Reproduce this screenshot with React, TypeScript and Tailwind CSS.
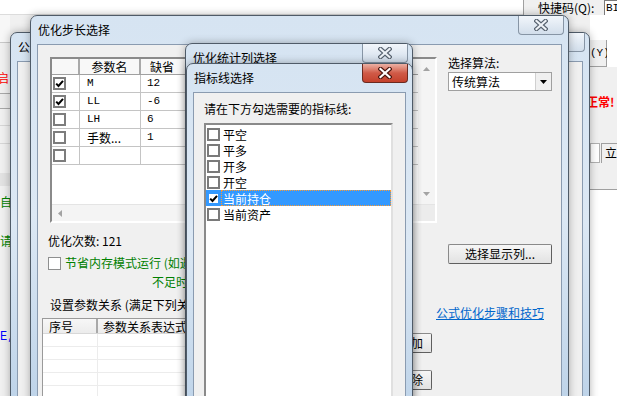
import React from "react";

const CJK = "font-['Noto_Sans_CJK_SC','Noto_Sans',sans-serif]";
const MONO = "font-['Liberation_Mono','Noto_Sans_CJK_SC',monospace]";

function XGlyph({ active }: { active?: boolean }) {
  return (
    <svg width="14" height="12" viewBox="0 0 14 12">
      <path d="M2.5 2 L11.5 10 M11.5 2 L2.5 10" stroke={active ? "#4a150e" : "#56616e"} strokeWidth="4.4" strokeLinecap="square" fill="none" />
      <path d="M2.5 2 L11.5 10 M11.5 2 L2.5 10" stroke={active ? "#ffffff" : "#eef2f7"} strokeWidth="2.2" strokeLinecap="square" fill="none" />
    </svg>
  );
}

function CloseBtn({ active }: { active?: boolean }) {
  return (
    <div
      className={`flex h-[19px] w-[46px] shrink-0 items-center justify-center rounded-b-[4px] border border-t-0 ${
        active
          ? "border-[#6b2a20] bg-gradient-to-b from-[#eab0a4] via-[#d05a47] to-[#c4412c]"
          : "border-[#8795a5] bg-gradient-to-b from-[#f2f6fb] to-[#d2deeb]"
      }`}
    >
      <XGlyph active={active} />
    </div>
  );
}

function Win({
  pos,
  title,
  active,
  children,
}: {
  pos: string;
  title: string;
  active?: boolean;
  children?: React.ReactNode;
}) {
  return (
    <div
      className={`absolute flex flex-col rounded-t-[7px] border border-[#4f5b68] bg-gradient-to-b from-[#d6e4f2] via-[#dce8f4] to-[#bcd2e8] shadow-[0_0_8px_rgba(0,0,0,0.3)] ${pos}`}
    >
      <div className="flex h-[28px] shrink-0 items-start justify-between pl-[7px] pr-[4px]">
        <span className="mt-[6px] whitespace-nowrap text-[12px] leading-[16px] text-black">{title}</span>
        <CloseBtn active={active} />
      </div>
      <div className="mx-[6px] flex-1 overflow-hidden border border-[#8a9bb0] bg-[#f0f0f0]">{children}</div>
    </div>
  );
}

function TableCheck({ checked }: { checked?: boolean }) {
  return (
    <span className="flex h-[13px] w-[13px] shrink-0 items-center justify-center border-2 border-[#7d7d7d] bg-white">
      {checked && (
        <svg width="9" height="9" viewBox="0 0 9 9">
          <path d="M1.2 4.6 L3.5 7 L8 1.8" stroke="#000" strokeWidth="2" fill="none" />
        </svg>
      )}
    </span>
  );
}

function ListCheck({ checked, sel }: { checked?: boolean; sel?: boolean }) {
  return (
    <span
      className={`flex h-[13px] w-[13px] shrink-0 items-center justify-center border-2 bg-white ${
        sel ? "border-[#3399ff]" : "border-[#7a7a7a]"
      }`}
    >
      {checked && (
        <svg width="9" height="9" viewBox="0 0 9 9">
          <path d="M1.2 4.6 L3.5 7 L8 1.8" stroke="#000" strokeWidth="2" fill="none" />
        </svg>
      )}
    </span>
  );
}

function Tri({ dir }: { dir: "up" | "down" | "left" }) {
  const d = dir === "up" ? "M0 4 L3.5 0 L7 4 Z" : dir === "down" ? "M0 0 L7 0 L3.5 4 Z" : "M4 0 L4 7 L0 3.5 Z";
  const w = dir === "left" ? 4 : 7;
  const h = dir === "left" ? 7 : 4;
  return (
    <svg width={w} height={h} viewBox={`0 0 ${w} ${h}`}>
      <path d={d} fill="#a3a3a3" />
    </svg>
  );
}

function BackgroundApp() {
  return (
    <div className="absolute inset-0 flex flex-col bg-[#f0f0f0]">
      <div className="flex h-[15px] shrink-0">
        <div className="flex-1 border-b border-[#dcdcdc] bg-white" />
        <div className="flex w-[94px] border-l border-[#a0a0a0] bg-[#f0f0f0]">
          <span className="ml-[14px] whitespace-nowrap text-[12px] leading-[15px]">快捷码(Q):</span>
          <div className={`ml-auto w-[13px] border-l border-t border-[#7a7a7a] bg-white pl-[1px] text-[11px] leading-[14px] ${MONO}`}>BI</div>
        </div>
      </div>
      <div className="flex flex-1">
        <div className="flex w-[10px] flex-col overflow-hidden">
          <div className="h-[28px] shrink-0 border-b border-[#c8c8c8] bg-[#f7f7f7]" />
          <div className="-ml-[3px] mt-[27px] text-[12px] leading-[16px] text-[#ff0000]">启</div>
          <div className="mt-[7px] h-[16px] shrink-0 border-y border-[#a8a8a8] bg-[#ececec]" />
          <div className="mt-[16px] border-b border-[#d6d6d6]" />
          <div className="mt-[17px] border-b border-[#d6d6d6]" />
          <div className="mt-[29px] h-[13px] shrink-0 bg-[#e2e2e2]" />
          <div className="mt-[8px] text-[12px] leading-[16px] text-[#008000]">自</div>
          <div className="mt-[23px] text-[12px] leading-[16px] text-[#008000]">请</div>
          <div className={`mt-[80px] text-[12px] leading-[16px] text-[#0000ff] ${MONO}`}>E,</div>
        </div>
        <div className="flex-1" />
        <div className="flex w-[27px] flex-col overflow-hidden">
          <div className="h-[25px] shrink-0 bg-white" />
          <div className="flex h-[27px] shrink-0">
            <div className={`w-[17px] border-b border-r border-[#a0a0a0] bg-[#f0f0f0] pt-[6px] text-[11px] leading-[14px] ${MONO}`}>(Y)</div>
            <div className="flex-1 bg-white" />
          </div>
          <div className="h-[76px] shrink-0 pt-[27px]">
            <div className="-ml-[4px] whitespace-nowrap text-[12px] font-bold leading-[16px] text-[#ff0000]">正常!</div>
          </div>
          <div className="flex h-[20px] shrink-0">
            <div className="w-[18px] border border-[#b0b0b0] bg-white" />
            <div className="ml-[1px] flex-1 border-l border-t border-[#a0a0a0] pl-[3px] text-[12px] leading-[18px]">立</div>
          </div>
          <div className="h-[27px] shrink-0 border-b border-[#a0a0a0]" />
          <div className="flex-1 bg-white" />
        </div>
      </div>
    </div>
  );
}

function ParamTable() {
  const rows: { c: boolean; n: string; v: string; cjk?: boolean }[] = [
    { c: true, n: "M", v: "12" },
    { c: true, n: "LL", v: "-6" },
    { c: false, n: "LH", v: "6" },
    { c: false, n: "手数...", v: "1", cjk: true },
    { c: false, n: "", v: "" },
  ];
  return (
    <div className="ml-[12px] mt-[12px] flex h-[166px] w-[387px] flex-col border-2 border-b-white border-l-[#8a8a8a] border-r-white border-t-[#8a8a8a] bg-white">
      <div className="flex min-h-0 flex-1">
        <div className="flex-1">
          <div className="flex h-[16px] border-b border-[#a0a0a0] bg-[#f8f8f8] text-[12px] leading-[15px]">
            <div className="w-[28px] border-r-2 border-[#a9a9a9]" />
            <div className="w-[61px] border-r-2 border-[#a9a9a9] text-center">参数名</div>
            <div className="flex-1 pl-[9px]">缺省</div>
          </div>
          {rows.map((r, i) => (
            <div key={i} className="flex h-[18px] border-b border-[#c4c4c4]">
              <div className="flex w-[28px] items-center border-r border-[#c4c4c4] pl-[1px]">
                <TableCheck checked={r.c} />
              </div>
              <div className={`w-[61px] border-r border-[#c4c4c4] pl-[7px] leading-[17px] ${r.cjk ? "text-[12px]" : `text-[11px] ${MONO}`}`}>{r.n}</div>
              <div className={`flex-1 pl-[6px] text-[11px] leading-[17px] ${MONO}`}>{r.v}</div>
            </div>
          ))}
        </div>
        <div className="flex w-[17px] flex-col items-center justify-between bg-[#f4f4f4] py-[8px]">
          <Tri dir="up" />
          <Tri dir="down" />
        </div>
      </div>
      <div className="flex h-[17px] shrink-0 border-t border-[#e4e4e4]">
        <div className="flex flex-1 items-center bg-[#f4f4f4] pl-[6px]">
          <Tri dir="left" />
        </div>
        <div className="w-[17px] bg-[#ececec]" />
      </div>
    </div>
  );
}

function RelTable() {
  return (
    <div className="ml-[4px] h-[90px] w-[338px] border border-[#9a9a9a] bg-white">
      <div className="flex h-[15px] border-b border-[#d8d8d8] bg-gradient-to-b from-[#f7f7f7] to-[#ececec] text-[12px] leading-[15px]">
        <div className="w-[55px] border-r-2 border-[#a9a9a9] pl-[6px]">序号</div>
        <div className="flex-1 pl-[5px]">参数关系表达式</div>
      </div>
      {[0, 1, 2, 3, 4].map((i) => (
        <div key={i} className="flex h-[13px] border-b border-[#ececec]">
          <div className="w-[55px] border-r border-[#ececec]" />
          <div className="flex-1" />
        </div>
      ))}
    </div>
  );
}

function Btn({ children, className }: { children: React.ReactNode; className: string }) {
  return (
    <div className={`flex items-center justify-center rounded-[2px] border border-[#8a8a8a] border-b-[#5f5f5f] border-r-[#5f5f5f] bg-gradient-to-b from-[#f6f6f6] to-[#e2e2e2] text-[12px] ${className}`}>
      {children}
    </div>
  );
}

function StepContent() {
  return (
    <div className="flex">
      <div className="flex w-[410px] shrink-0 flex-col">
        <ParamTable />
        <div className="ml-[10px] mt-[10px] text-[12px] leading-[16px]">优化次数: 121</div>
        <div className="ml-[10px] mt-[4px] flex items-start">
          <div className="mt-[4px] flex h-[13px] w-[13px] shrink-0 border border-[#8e8f8f] bg-white" />
          <div className="ml-[4px] text-[12px] leading-[19px] text-[#008000]">
            <div className="whitespace-nowrap">节省内存模式运行 (如遇内存</div>
            <div className="whitespace-nowrap pl-[87px]">不足时使用)</div>
          </div>
        </div>
        <div className="ml-[12px] mt-[6px] whitespace-nowrap text-[12px] leading-[16px]">设置参数关系 (满足下列关系的参数组合)</div>
        <div className="mt-[5px] flex">
          <RelTable />
          <div className="ml-[10px] flex flex-col gap-[17px] pt-[15px]">
            <Btn className="h-[20px] w-[42px]">添加</Btn>
            <Btn className="h-[20px] w-[42px]">删除</Btn>
          </div>
        </div>
      </div>
      <div className="flex flex-col">
        <div className="mt-[10px] text-[12px] leading-[16px]">选择算法:</div>
        <div className="mt-[1px] flex h-[19px] w-[104px] border border-[#a0a0a0] bg-white">
          <div className="flex-1 pl-[3px] text-[12px] leading-[17px]">传统算法</div>
          <div className="flex w-[16px] items-center justify-center border-l border-[#d0d0d0] bg-[#f0f0f0]">
            <svg width="7" height="4" viewBox="0 0 7 4">
              <path d="M0 0 L7 0 L3.5 4 Z" fill="#000" />
            </svg>
          </div>
        </div>
        <Btn className="mt-[153px] h-[20px] w-[104px]">选择显示列...</Btn>
        <div className="-ml-[12px] mt-[41px] whitespace-nowrap text-[12px] leading-[16px] text-[#0066cc] underline">公式优化步骤和技巧</div>
      </div>
    </div>
  );
}

function IndicatorContent() {
  const items = ["平空", "平多", "开多", "开空", "当前持仓", "当前资产"];
  return (
    <div className="flex flex-col pl-[10px] pr-[12px]">
      <div className="mt-[8px] whitespace-nowrap text-[12px] leading-[16px]">请在下方勾选需要的指标线:</div>
      <div className="mt-[6px] h-[300px] border-2 border-b-[#e6e6e6] border-l-[#8a8a8a] border-r-[#e0e0e0] border-t-[#8a8a8a] bg-white pt-[1px]">
        {items.map((t, i) => {
          const sel = i === 4;
          return (
            <div key={t} className={`flex h-[16px] items-center ${sel ? "bg-[#3399ff]" : ""}`}>
              <span className="ml-[1px]">
                <ListCheck checked={sel} sel={sel} />
              </span>
              <div
                className={`ml-[1px] h-[16px] flex-1 pl-[1px] text-[12px] leading-[15px] ${
                  sel ? "border border-dotted border-[#ff9a2e] text-white" : "border border-transparent"
                }`}
              >
                {t}
              </div>
            </div>
          );
        })}
      </div>
    </div>
  );
}

export default function App() {
  return (
    <div className={`relative h-[396px] w-[617px] overflow-hidden bg-[#f0f0f0] text-black ${CJK}`}>
      <BackgroundApp />
      <Win pos="left-[10px] top-[32px] h-[380px] w-[580px]" title="公式优化" />
      <Win pos="left-[30px] top-[15px] h-[400px] w-[539px]" title="优化步长选择">
        <StepContent />
      </Win>
      <Win pos="left-[185px] top-[43px] h-[380px] w-[228px]" title="优化统计列选择" />
      <Win pos="left-[186px] top-[63px] h-[360px] w-[227px]" title="指标线选择" active>
        <IndicatorContent />
      </Win>
    </div>
  );
}
